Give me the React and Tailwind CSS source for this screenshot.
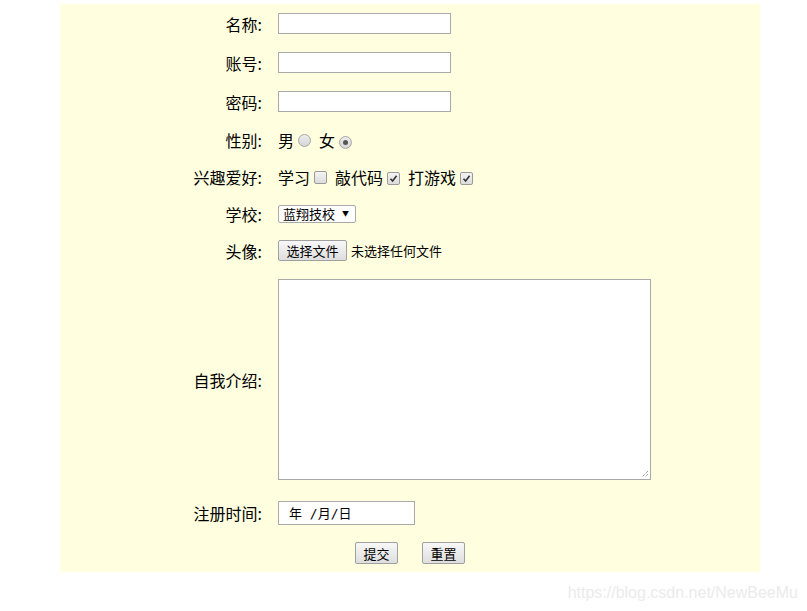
import React from 'react';

const Radio = ({ checked }) => (
  <span className="inline-flex w-[13px] h-[13px] rounded-full border border-[#a6a6a6] bg-gradient-to-b from-[#ececec] to-[#d6d6d6] items-center justify-center">
    {checked && <span className="w-[5px] h-[5px] rounded-full bg-[#555]"></span>}
  </span>
);

const Check = ({ checked }) => (
  <span className="inline-flex w-[13px] h-[13px] rounded-[2px] border border-[#9a9a9a] bg-gradient-to-b from-[#f4f4f4] to-[#dcdcdc] items-center justify-center">
    {checked && (
      <svg width="9" height="9" viewBox="0 0 9 9">
        <path d="M1.5 4.8 L3.6 7 L7.6 1.8" fill="none" stroke="#333" strokeWidth="1.6" />
      </svg>
    )}
  </span>
);

const Row = ({ label, h, children }) => (
  <div className="flex items-center" style={{ height: h }}>
    <div className="w-[203px] text-right pr-[1px]">{label}</div>
    <div className="ml-[15px] flex items-center">{children}</div>
  </div>
);

export default function App() {
  const box = 'bg-white border border-[#a9a9a9]';
  return (
    <div className="w-[807px] h-[611px] bg-white font-['Noto_Sans_CJK_SC',sans-serif] text-[16px] text-black leading-none">
      <div className="pt-[4px] pl-[60px]">
        <div className="w-[700px] h-[568px] bg-[#ffffe0]">
          <Row label="名称:" h={39}>
            <div className={`w-[173px] h-[21px] ${box}`}></div>
          </Row>
          <Row label="账号:" h={39}>
            <div className={`w-[173px] h-[21px] ${box}`}></div>
          </Row>
          <Row label="密码:" h={39}>
            <div className={`w-[173px] h-[21px] ${box}`}></div>
          </Row>
          <Row label="性别:" h={37}>
            <span>男</span>
            <span className="ml-[4px]"><Radio /></span>
            <span className="ml-[8px]">女</span>
            <span className="ml-[4px]"><Radio checked /></span>
          </Row>
          <Row label="兴趣爱好:" h={37}>
            <span>学习</span>
            <span className="ml-[4px]"><Check /></span>
            <span className="ml-[8px]">敲代码</span>
            <span className="ml-[4px]"><Check checked /></span>
            <span className="ml-[8px]">打游戏</span>
            <span className="ml-[4px]"><Check checked /></span>
          </Row>
          <Row label="学校:" h={37}>
            <div className="w-[78px] h-[18px] bg-white border border-[#a9a9a9] rounded-[2px] flex items-center pl-[4px] text-[13px]">
              <span>蓝翔技校</span>
              <span className="ml-[7px] text-[7px]">▼</span>
            </div>
          </Row>
          <Row label="头像:" h={37}>
            <div className="w-[69px] h-[21px] border border-[#a0a0a0] rounded-[2px] bg-gradient-to-b from-[#f8f8f8] to-[#dedede] flex items-center justify-center text-[13px]">
              选择文件
            </div>
            <span className="ml-[4px] text-[13px]">未选择任何文件</span>
          </Row>
          <Row label="自我介绍:" h={221}>
            <div className={`relative w-[373px] h-[201px] ${box}`}>
              <svg className="absolute right-[1px] bottom-[1px]" width="9" height="9" viewBox="0 0 9 9">
                <path d="M8 2 L2 8 M8 5 L5 8" stroke="#777" strokeWidth="1" strokeDasharray="1 1" />
              </svg>
            </div>
          </Row>
          <Row label="注册时间:" h={46}>
            <div className={`w-[137px] h-[24px] ${box} flex items-center pl-[10px] text-[13px] font-['DejaVu_Sans_Mono','Noto_Sans_CJK_SC',monospace]`}>
              年 /月/日
            </div>
          </Row>
          <div className="h-[34px] flex items-center justify-center gap-[24px]">
            <div className="w-[43px] h-[22px] border border-[#a0a0a0] rounded-[2px] bg-gradient-to-b from-[#f8f8f8] to-[#dedede] flex items-center justify-center text-[13px]">
              提交
            </div>
            <div className="w-[43px] h-[22px] border border-[#a0a0a0] rounded-[2px] bg-gradient-to-b from-[#f8f8f8] to-[#dedede] flex items-center justify-center text-[13px]">
              重置
            </div>
          </div>
        </div>
      </div>
      <div className="mt-[13px] pr-[9px] text-right text-[#ebebeb] text-[16px] font-['Liberation_Sans',sans-serif]">
        https://blog.csdn.net/NewBeeMu
      </div>
    </div>
  );
}
